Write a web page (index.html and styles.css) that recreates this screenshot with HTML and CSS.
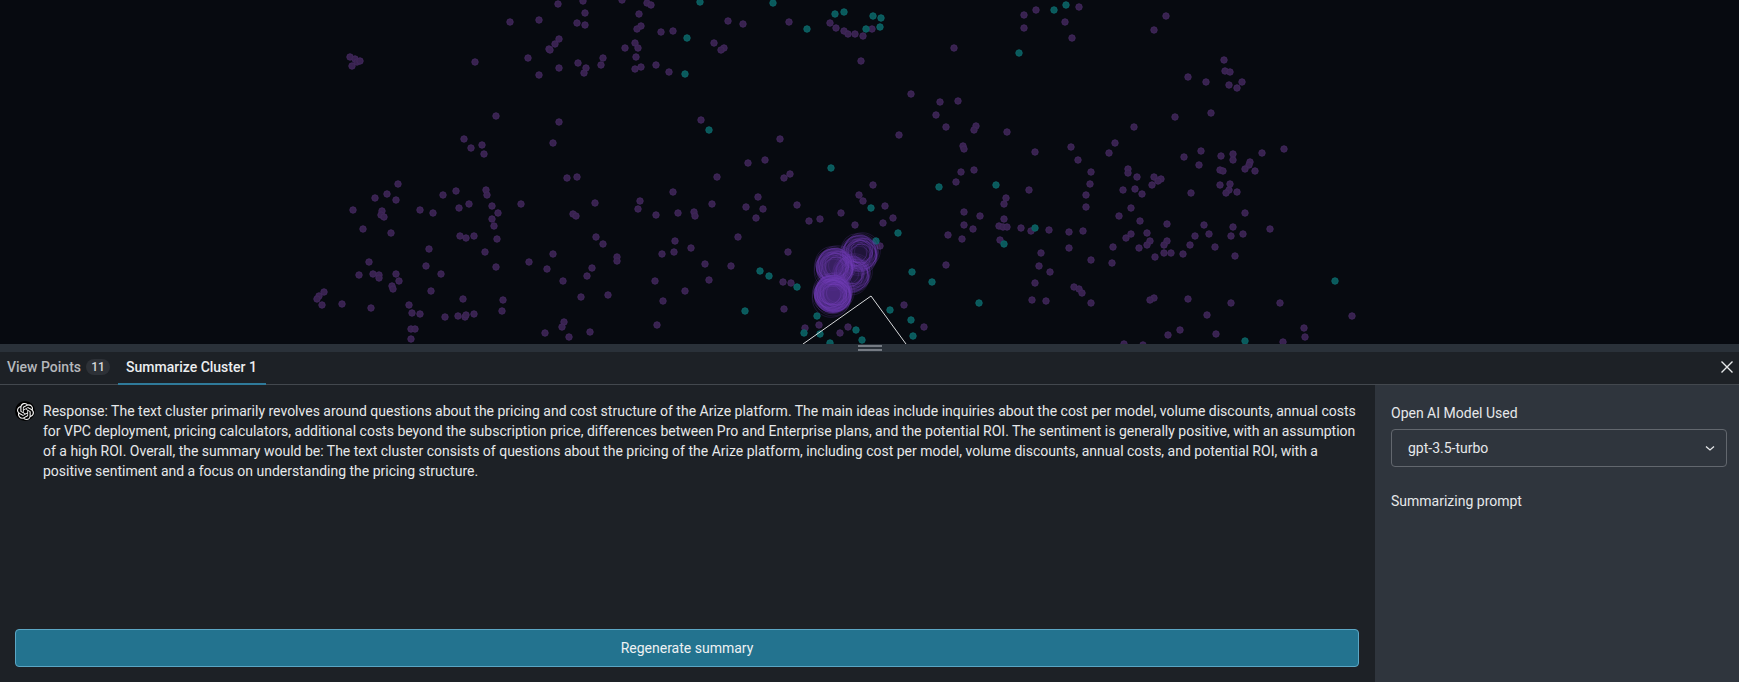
FILE: index.html
```html
<!DOCTYPE html>
<html lang="en">
<head>
    <meta charset="UTF-8">
    <meta name="viewport" content="width=device-width, initial-scale=1.0">
    <title>Summarize Cluster</title>
    <link rel="stylesheet" href="styles.css">
</head>
<body>
    <div class="app">
        <!-- Point cloud -->
        <div class="plot">
            <svg id="cloud" class="cloud" width="1739" height="344" viewBox="0 0 1739 344"></svg>
        </div>

        <!-- Drag handle -->
        <div class="resize-bar"><span class="grip"></span></div>

        <!-- Bottom panel -->
        <div class="panel">
            <div class="tab-row">
                <div class="tab">View Points <span class="count">11</span></div>
                <div class="tab tab-active">Summarize Cluster 1</div>
                <svg class="close-icon" width="14" height="14" viewBox="0 0 14 14">
                    <path d="M1.5 1.5 L12.5 12.5 M12.5 1.5 L1.5 12.5"></path>
                </svg>
            </div>

            <div class="panel-body">
                <div class="summary">
                    <div class="message">
                        <span class="avatar">
                            <svg width="17" height="17" viewBox="0 0 24 24">
                                <path d="M22.2819 9.8211a5.9847 5.9847 0 0 0-.5157-4.9108 6.0462 6.0462 0 0 0-6.5098-2.9A6.0651 6.0651 0 0 0 4.9807 4.1818a5.9847 5.9847 0 0 0-3.9977 2.9 6.0462 6.0462 0 0 0 .7427 7.0966 5.98 5.98 0 0 0 .511 4.9107 6.051 6.051 0 0 0 6.5146 2.9001A5.9847 5.9847 0 0 0 13.2599 24a6.0557 6.0557 0 0 0 5.7718-4.2058 5.9894 5.9894 0 0 0 3.9977-2.9001 6.0557 6.0557 0 0 0-.7475-7.0729zm-9.022 12.6081a4.4755 4.4755 0 0 1-2.8764-1.0408l.1419-.0804 4.7783-2.7582a.7948.7948 0 0 0 .3927-.6813v-6.7369l2.02 1.1686a.071.071 0 0 1 .038.052v5.5826a4.504 4.504 0 0 1-4.4945 4.4944zm-9.6607-4.1254a4.4708 4.4708 0 0 1-.5346-3.0137l.142.0852 4.783 2.7582a.7712.7712 0 0 0 .7806 0l5.8428-3.3685v2.3324a.0804.0804 0 0 1-.0332.0615L9.74 19.9502a4.4992 4.4992 0 0 1-6.1408-1.6464zM2.3408 7.8956a4.485 4.485 0 0 1 2.3655-1.9728V11.6a.7664.7664 0 0 0 .3879.6765l5.8144 3.3543-2.0201 1.1685a.0757.0757 0 0 1-.071 0l-4.8303-2.7865A4.504 4.504 0 0 1 2.3408 7.872zm16.5963 3.8558L13.1038 8.364 15.1192 7.2a.0757.0757 0 0 1 .071 0l4.8303 2.7913a4.4944 4.4944 0 0 1-.6765 8.1042v-5.6772a.79.79 0 0 0-.407-.667zm2.0107-3.0231l-.142-.0852-4.7735-2.7818a.7759.7759 0 0 0-.7854 0L9.409 9.2297V6.8974a.0662.0662 0 0 1 .0284-.0615l4.8303-2.7866a4.4992 4.4992 0 0 1 6.6802 4.66zM8.3065 12.863l-2.02-1.1638a.0804.0804 0 0 1-.038-.0567V6.0742a4.4992 4.4992 0 0 1 7.3757-3.4537l-.142.0805L8.704 5.459a.7948.7948 0 0 0-.3927.6813zm1.0976-2.3654l2.602-1.4998 2.6069 1.4998v2.9994l-2.5974 1.4997-2.6067-1.4997Z"></path>
                            </svg>
                        </span>
                        <p>Response: The text cluster primarily revolves around questions about the pricing and cost structure of the Arize platform. The main ideas include inquiries about the cost per model, volume discounts, annual costs for VPC deployment, pricing calculators, additional costs beyond the subscription price, differences between Pro and Enterprise plans, and the potential ROI. The sentiment is generally positive, with an assumption of a high ROI. Overall, the summary would be: The text cluster consists of questions about the pricing of the Arize platform, including cost per model, volume discounts, annual costs, and potential ROI, with a positive sentiment and a focus on understanding the pricing structure.</p>
                    </div>
                    <button class="btn">Regenerate summary</button>
                </div>

                <div class="sidebar">
                    <div class="field-label">Open AI Model Used</div>
                    <div class="select">
                        <span>gpt-3.5-turbo</span>
                        <svg width="12" height="12" viewBox="0 0 12 12">
                            <path d="M2 4.5 L6 8 L10 4.5"></path>
                        </svg>
                    </div>
                    <div class="field-label prompt-label">Summarizing prompt</div>
                </div>
            </div>
        </div>
    </div>

    <script src="script.js"></script>
</body>
</html>
```

FILE: styles.css
```css
body {
    font-family: Roboto, "Liberation Sans", sans-serif;
    font-size: 14px;
    line-height: 20px;
    margin: 0;
    padding: 0;
    background-color: #1d2126;
    color: #e6e8ea;
}

.app {
    display: flex;
    flex-direction: column;
    height: 100vh;
    overflow: hidden;
}

/* Point cloud */
.plot {
    height: 344px;
    flex: none;
    background-color: #070a10;
}

.cloud {
    display: block;
}

.point {
    stroke-width: 1;
}

.point-purple {
    fill: #38224f;
    stroke: #40275a;
}

.point-teal {
    fill: #0a5a5c;
    stroke: #0c6466;
}

.disc {
    fill: #5a2f98;
}

.ring {
    fill: none;
    stroke: #7a3fc0;
    stroke-width: 0.5;
    stroke-opacity: 0.4;
}

.wire {
    fill: none;
    stroke: #d8dadc;
    stroke-width: 1;
}

/* Drag handle */
.resize-bar {
    height: 8px;
    flex: none;
    display: flex;
    justify-content: center;
    background-color: #2a3139;
}

.grip {
    width: 24px;
    height: 6px;
    margin-top: 1px;
    border-top: 2px solid #757b83;
    border-bottom: 2px solid #757b83;
    box-sizing: border-box;
}

/* Bottom panel */
.panel {
    flex: 1;
    display: flex;
    flex-direction: column;
    min-height: 0;
}

.tab-row {
    height: 32px;
    flex: none;
    display: flex;
    align-items: stretch;
    padding-left: 7px;
    border-bottom: 1px solid #43484e;
    position: relative;
}

.tab {
    display: flex;
    align-items: center;
    gap: 5px;
    font-weight: 500;
    color: #b4b7bb;
    margin-right: 8px;
    padding-bottom: 2px;
}

.tab-active {
    color: #eceef0;
    padding: 0 9px 2px 8px;
    border-bottom: 2px solid #2f7a9a;
    margin-bottom: -1px;
}

.count {
    display: inline-block;
    min-width: 24px;
    height: 16px;
    line-height: 16px;
    font-size: 12px;
    text-align: center;
    background-color: #2d3137;
    border-radius: 8px;
    color: #d5d7da;
}

.close-icon {
    position: absolute;
    right: 5px;
    top: 8px;
}

.close-icon path {
    stroke: #e6e8ea;
    stroke-width: 1.4;
    fill: none;
}

.panel-body {
    flex: 1;
    display: flex;
    min-height: 0;
}

.summary {
    flex: 1;
    display: flex;
    flex-direction: column;
    justify-content: space-between;
    padding: 16px 16px 15px 15px;
}

.message {
    display: flex;
    gap: 8px;
}

.message p {
    margin: 0;
}

.avatar {
    flex: none;
    width: 20px;
    height: 20px;
    border-radius: 50%;
    background-color: #000;
    display: flex;
    align-items: center;
    justify-content: center;
}

.avatar path {
    fill: #f5f5f5;
}

.btn {
    display: block;
    width: 100%;
    height: 38px;
    background: #23738f;
    color: #eef1f3;
    border: 1px solid #5ba6c4;
    border-radius: 4px;
    font-family: inherit;
    font-size: 14px;
    cursor: pointer;
}

/* Right column */
.sidebar {
    width: 364px;
    flex: none;
    box-sizing: border-box;
    background-color: #2f353d;
    padding: 18px 12px 0 16px;
}

.field-label {
    color: #e6e8ea;
    margin-bottom: 6px;
}

.select {
    height: 38px;
    box-sizing: border-box;
    display: flex;
    align-items: center;
    justify-content: space-between;
    padding: 0 10px 0 16px;
    border: 1px solid #62676e;
    border-radius: 4px;
}

.select path {
    stroke: #e6e8ea;
    stroke-width: 1.3;
    fill: none;
}

.prompt-label {
    margin-top: 24px;
}
```

FILE: script.js
```js
const purple = [
    [558,4],[583,1],[622,0],[647,3],[651,5],[585,13],[639,14],[510,22],[539,20],[577,23],[585,25],[641,26],[637,29],[661,32],[673,31],[728,21],[743,24],[789,22],[559,39],[555,44],[549,49],[550,50],[635,43],[625,48],[638,48],[714,43],[724,48],[721,50],[528,58],[603,58],[636,57],[350,57],[355,59],[357,62],[360,61],[352,66],[475,62],[559,68],[578,63],[586,68],[584,73],[601,65],[635,69],[641,67],[656,65],[669,72],[539,75],
    [496,116],[559,122],[701,120],[464,139],[482,145],[471,148],[484,154],[553,143],[780,139],[765,160],[748,163],[790,174],[784,178],[717,177],[567,178],[577,177],
    [398,184],[387,194],[375,198],[396,200],[353,210],[382,211],[381,215],[384,217],[420,210],[433,213],[443,195],[456,191],[486,190],[487,195],[469,204],[459,208],[492,206],[498,213],[492,219],[494,226],[521,204],[595,203],[640,201],[638,209],[673,192],[656,215],[678,213],[694,212],[695,216],[712,204],[746,207],[758,197],[763,209],[756,218],[797,205],[573,214],[576,216],
    [363,229],[391,233],[460,236],[466,238],[474,236],[497,239],[596,237],[603,244],[675,241],[738,237],[691,248],[674,252],[662,254],[788,252],[429,249],[485,252],[553,254],[617,257],[617,261],
    [369,262],[426,266],[529,262],[496,267],[547,269],[592,268],[705,264],[731,266],[359,275],[373,274],[379,275],[379,278],[396,274],[399,281],[441,274],[587,276],[563,281],[655,281],[709,280],[783,282],[791,283],
    [392,286],[393,289],[431,291],[685,291],[324,292],[319,296],[317,299],[322,305],[342,304],[371,308],[409,305],[463,299],[503,300],[502,311],[581,297],[608,295],[663,301],[784,309],
    [412,313],[420,314],[445,317],[458,316],[465,317],[466,315],[474,314],[564,322],[562,327],[545,333],[569,337],[590,332],[657,325],[411,329],[415,329],[411,339],
    [830,23],[836,28],[844,31],[848,34],[855,34],[863,36],[872,29],[861,61],[1024,15],[1036,10],[1079,7],[1024,28],[1065,22],[1072,38],[1166,16],[1154,30],[954,48],
    [1224,60],[1225,71],[1230,72],[1188,77],[1206,82],[1242,82],[1229,85],[1237,88],[911,94],[940,102],[958,101],[936,115],[1175,117],[1211,113],[946,127],[976,126],[974,130],[1007,132],[899,135],[1134,127],
    [1115,143],[1109,153],[963,146],[964,149],[1035,152],[1071,147],[1078,160],[1201,151],[1184,157],[1221,156],[1233,154],[1233,160],[1262,153],[1284,149],[1250,162],[1249,165],[1245,169],[1255,171],
    [1199,165],[1220,170],[1223,171],[1128,169],[1128,173],[1137,177],[1091,172],[1154,177],[1161,179],[1158,181],[1152,185],[1090,184],[974,170],[961,172],[956,182],
    [873,185],[859,195],[863,201],[885,206],[1029,190],[1006,198],[1004,204],[1123,190],[1135,189],[1142,194],[1086,195],[1220,185],[1230,184],[1229,190],[1226,193],[1237,192],[1191,193],
    [1086,207],[1131,208],[1245,213],[964,212],[980,216],[1119,216],[841,213],[809,221],[820,219],[893,218],[883,223],[855,225],[1140,221],[1167,224],[1204,225],[1004,219],[964,225],[973,229],[999,226],[1003,227],[1007,227],[1021,228],[1031,231],[1049,230],[1069,232],[1083,231],[1147,233],[1233,227],[1270,229],[1131,234],[1126,238],[948,235],[962,239],[1000,240],[1195,236],[1209,234],[1231,236],[1243,234],
    [1150,241],[1147,245],[1167,241],[1164,245],[880,246],[1069,248],[1113,247],[1139,248],[1190,245],[1215,247],[1041,253],[1164,253],[1171,253],[1183,254],[1155,257],[1235,256],[1091,260],[1112,263],[1039,266],[1050,272],[946,265],[1035,283],[1074,287],[1079,289],[1082,293],[1032,300],[1046,301],[1091,303],[1154,298],[1150,300],[1188,299],[1231,303],[1280,303],[904,305],[924,327],[848,327],[840,333],[819,325],[805,328],[1207,315],[1352,316],[1304,328],[1305,337],[1180,330],[1168,335],[1216,334],[1283,342],[1124,344],[1143,345]
];

const teal = [
    [700,2],[773,3],[687,38],[685,74],[709,130],[760,271],[769,276],[797,287],[745,311],
    [807,29],[835,14],[844,12],[873,16],[881,18],[880,27],[866,29],[1054,10],[1066,5],[1019,53],[831,168],[939,187],[996,185],[871,208],[898,233],[876,241],[1035,228],[1004,244],[912,272],[932,282],[979,303],[890,310],[911,320],[913,336],[1335,281],[817,316],[804,333],[820,334],[856,330],[862,340],[830,343],[1245,341]
];

// the dense cluster: lots of rings stacked around a few centers
const blobs = [
    { x: 852, y: 274, r: 18, n: 22, fill: 0.35 },
    { x: 860, y: 253, r: 18, n: 30, fill: 0.3 },
    { x: 835, y: 267, r: 19, n: 30, fill: 0.6 },
    { x: 833, y: 294, r: 19, n: 36, fill: 0.8 }
];

const cloud = document.getElementById('cloud');

function addShape(tag, attrs) {
    const el = document.createElementNS('http://www.w3.org/2000/svg', tag);
    Object.keys(attrs).forEach(key => el.setAttribute(key, attrs[key]));
    cloud.appendChild(el);
}

purple.forEach(p => addShape('circle', { cx: p[0], cy: p[1], r: 3.2, class: 'point point-purple' }));
teal.forEach(p => addShape('circle', { cx: p[0], cy: p[1], r: 3.2, class: 'point point-teal' }));

blobs.forEach(b => {
    addShape('circle', { cx: b.x, cy: b.y, r: b.r, class: 'disc', 'fill-opacity': b.fill });
    for (let i = 0; i < b.n; i++) {
        const angle = i * 2.4;
        const dist = 0.5 + (i % 7) * 0.7;
        addShape('circle', {
            cx: b.x + Math.cos(angle) * dist,
            cy: b.y + Math.sin(angle) * dist,
            r: b.r - (i % 9) * 1.1,
            class: 'ring'
        });
    }
});

addShape('polyline', { points: '803,344 871,296 906,344', class: 'wire' });
```
